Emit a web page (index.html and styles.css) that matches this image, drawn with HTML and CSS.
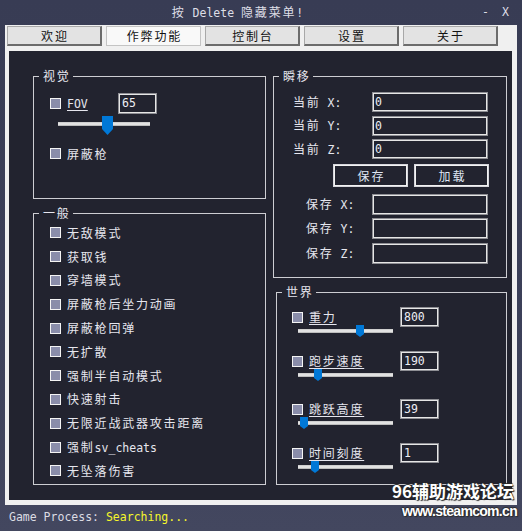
FILE: index.html
```html
<!DOCTYPE html>
<html lang="zh-CN">
<head>
<meta charset="utf-8">
<title>Menu</title>
<link rel="stylesheet" href="styles.css">
</head>
<body>
<div class="window">
  <header class="titlebar">
    <div class="title">按<span class="m"> Delete </span>隐藏菜单<span class="m">!</span></div>
    <span class="m ctl ctl-min">-</span>
    <span class="m ctl ctl-close">X</span>
  </header>

  <main class="panel">
    <nav class="tabs">
      <div class="tab">欢迎</div>
      <div class="tab active">作弊功能</div>
      <div class="tab">控制台</div>
      <div class="tab">设置</div>
      <div class="tab">关于</div>
    </nav>

    <div class="content">
      <div class="col">
        <section class="group g-visual">
          <span class="legend">视觉</span>
          <div class="row">
            <span class="cb"></span>
            <span class="lbl u fov-lbl"><span class="m">FOV</span></span>
            <div class="inp m fov-inp">65</div>
          </div>
          <div class="slider big">
            <div class="track"></div>
            <svg class="thumb" style="left:44px" width="11" height="19" viewBox="0 0 11 19"><polygon points="0,0 11,0 11,13 5.5,19 0,13" fill="#0078d7"/></svg>
          </div>
          <div class="row r-gun">
            <span class="cb"></span>
            <span class="lbl">屏蔽枪</span>
          </div>
        </section>

        <section class="group g-general">
          <span class="legend">一般</span>
          <div class="grow"><span class="cb"></span><span class="lbl">无敌模式</span></div>
          <div class="grow"><span class="cb"></span><span class="lbl">获取钱</span></div>
          <div class="grow"><span class="cb"></span><span class="lbl">穿墙模式</span></div>
          <div class="grow"><span class="cb"></span><span class="lbl">屏蔽枪后坐力动画</span></div>
          <div class="grow"><span class="cb"></span><span class="lbl">屏蔽枪回弹</span></div>
          <div class="grow"><span class="cb"></span><span class="lbl">无扩散</span></div>
          <div class="grow"><span class="cb"></span><span class="lbl">强制半自动模式</span></div>
          <div class="grow"><span class="cb"></span><span class="lbl">快速射击</span></div>
          <div class="grow"><span class="cb"></span><span class="lbl">无限近战武器攻击距离</span></div>
          <div class="grow"><span class="cb"></span><span class="lbl">强制<span class="m">sv_cheats</span></span></div>
          <div class="grow"><span class="cb"></span><span class="lbl">无坠落伤害</span></div>
        </section>
      </div>

      <div class="col">
        <section class="group g-tp">
          <span class="legend">瞬移</span>
          <div class="tp-row"><span class="lbl tp-lbl">当前<span class="m"> X:</span></span><div class="inp m tp-inp">0</div></div>
          <div class="tp-row"><span class="lbl tp-lbl">当前<span class="m"> Y:</span></span><div class="inp m tp-inp">0</div></div>
          <div class="tp-row"><span class="lbl tp-lbl">当前<span class="m"> Z:</span></span><div class="inp m tp-inp">0</div></div>
          <div class="tp-btns">
            <div class="btn">保存</div>
            <div class="btn">加载</div>
          </div>
          <div class="tp-saved">
            <div class="tp-row sv"><span class="lbl sv-lbl">保存<span class="m"> X:</span></span><div class="inp m tp-inp sv-inp"></div></div>
            <div class="tp-row sv"><span class="lbl sv-lbl">保存<span class="m"> Y:</span></span><div class="inp m tp-inp sv-inp"></div></div>
            <div class="tp-row sv"><span class="lbl sv-lbl">保存<span class="m"> Z:</span></span><div class="inp m tp-inp sv-inp"></div></div>
          </div>
        </section>

        <section class="group g-world">
          <span class="legend">世界</span>
          <div class="witem">
            <div class="wrow"><span class="cb"></span><span class="lbl u w-lbl">重力</span><div class="inp m w-inp">800</div></div>
            <div class="slider small">
              <div class="track"></div>
              <svg class="thumb" style="left:58px" width="8" height="12" viewBox="0 0 8 12"><polygon points="0,0 8,0 8,9 4,12 0,9" fill="#0078d7"/></svg>
            </div>
          </div>
          <div class="witem">
            <div class="wrow"><span class="cb"></span><span class="lbl u w-lbl">跑步速度</span><div class="inp m w-inp">190</div></div>
            <div class="slider small">
              <div class="track"></div>
              <svg class="thumb" style="left:16px" width="8" height="12" viewBox="0 0 8 12"><polygon points="0,0 8,0 8,9 4,12 0,9" fill="#0078d7"/></svg>
            </div>
          </div>
          <div class="witem w-wide">
            <div class="wrow"><span class="cb"></span><span class="lbl u w-lbl">跳跃高度</span><div class="inp m w-inp">39</div></div>
            <div class="slider small">
              <div class="track"></div>
              <svg class="thumb" style="left:2px" width="8" height="12" viewBox="0 0 8 12"><polygon points="0,0 8,0 8,9 4,12 0,9" fill="#0078d7"/></svg>
            </div>
          </div>
          <div class="witem">
            <div class="wrow"><span class="cb"></span><span class="lbl u w-lbl">时间刻度</span><div class="inp m w-inp">1</div></div>
            <div class="slider small">
              <div class="track"></div>
              <svg class="thumb" style="left:13px" width="8" height="12" viewBox="0 0 8 12"><polygon points="0,0 8,0 8,9 4,12 0,9" fill="#0078d7"/></svg>
            </div>
          </div>
        </section>
      </div>
    </div>
  </main>

  <footer class="status m">Game Process: <span class="searching">Searching...</span></footer>

  <div class="wm">
    <div class="wm1">96辅助游戏论坛</div>
    <div class="wm2">www.steamcom.cn</div>
  </div>
</div>
</body>
</html>
```

FILE: styles.css
```css
html, body {
  margin: 0;
  padding: 0;
}

body {
  width: 522px;
  height: 531px;
  overflow: hidden;
  background: #3a3e56;
  font-family: "Noto Sans CJK SC", sans-serif;
  font-size: 12px;
  letter-spacing: 1.8px;
  color: #e6e6ee;
}

.m {
  font-family: "DejaVu Sans Mono", monospace;
  font-size: 11.5px;
  letter-spacing: 0;
}

.window {
  position: relative;
  width: 522px;
  height: 531px;
  background: linear-gradient(#383c54, #3c4059 60%, #43475f);
}

/* title bar */
.titlebar {
  height: 25px;
  display: flex;
  align-items: center;
  color: #dedee6;
  line-height: 25px;
}

.title {
  width: 475px;
  text-align: center;
  white-space: nowrap;
}

.ctl-min {
  margin-left: 7px;
}

.ctl-close {
  margin-left: 13px;
}

/* light panel */
.panel {
  display: block;
  margin: 0 5px;
  height: 480px;
  background: #f0f0f0;
  box-sizing: border-box;
}

.tabs {
  display: flex;
  gap: 4px;
  height: 26px;
  padding: 1px 0 0 2px;
  box-sizing: border-box;
}

.tab {
  width: 95px;
  height: 20px;
  box-sizing: border-box;
  background: #e3e3e3;
  border: 1px solid #a8a8a8;
  border-right: 2px solid #6c6c6c;
  border-bottom: 2px solid #6c6c6c;
  color: #111;
  font-size: 12px;
  line-height: 17px;
  text-align: center;
  text-indent: 1.8px;
}

.tab.active {
  background: #f9f9f9;
  border: 1px solid #c4c4c4;
  line-height: 18px;
}

.content {
  display: flex;
  gap: 7px;
  margin: 0 5px 5px 4px;
  height: 449px;
  box-sizing: border-box;
  padding: 25px 5px 15px 24px;
  background: #22232f;
}

.col {
  display: flex;
  flex-direction: column;
  gap: 14px;
}

.col:first-child {
  width: 233px;
}

.col:last-child {
  width: 234px;
}

/* group boxes */
.group {
  position: relative;
  box-sizing: border-box;
  border: 1px solid #cdcdd2;
}

.legend {
  position: absolute;
  top: -9px;
  left: 5px;
  padding: 0 2px 0 4px;
  background: #22232f;
  line-height: 16px;
  white-space: nowrap;
}

.cb {
  flex: none;
  width: 11px;
  height: 11px;
  box-sizing: border-box;
  border: 1px solid #f4f4f4;
  background: #8a8daa;
  margin-right: 6px;
}

.lbl {
  white-space: nowrap;
  line-height: 16px;
}

.u {
  text-decoration: underline;
  text-underline-offset: 2px;
}

.inp {
  box-sizing: border-box;
  border: 1px solid #8e8e94;
  box-shadow: inset 0 0 0 1px #e6e6e6;
  background: #22232f;
  color: #eeeef4;
  padding-left: 3px;
  white-space: nowrap;
}

/* visual */
.g-visual {
  height: 123px;
  padding: 16px 0 0 16px;
}

.row {
  display: flex;
  align-items: center;
  height: 21px;
}

.fov-lbl {
  width: 51px;
}

.fov-inp {
  width: 39px;
  height: 21px;
  line-height: 19px;
}

.r-gun {
  margin-top: 8px;
}

.slider {
  position: relative;
  box-sizing: border-box;
}

.slider .track {
  height: 4px;
  background: #e2e2e2;
  box-shadow: inset 0 -1px 0 #bdbdbd, inset 0 1px 0 #cfcfcf;
}

.slider .thumb {
  position: absolute;
  top: 0;
  display: block;
}

.slider.big {
  width: 92px;
  height: 19px;
  margin: 2px 0 0 8px;
  padding-top: 6px;
}

.slider.small {
  width: 95px;
  height: 12px;
  margin: -2px 0 0 6px;
  padding-top: 4px;
}

/* general */
.g-general {
  height: 272px;
  padding: 7px 0 0 16px;
}

.grow {
  display: flex;
  align-items: center;
  height: 23.8px;
}

/* teleport */
.g-tp {
  height: 202px;
  padding: 15px 0 0 19px;
}

.tp-row {
  display: flex;
  align-items: center;
  height: 20px;
  margin-bottom: 3.5px;
}

.tp-lbl {
  width: 79px;
}

.tp-inp {
  width: 116px;
  height: 20px;
  line-height: 18px;
  padding-left: 2px;
}

.tp-btns {
  display: flex;
  gap: 6px;
  margin: 4.5px 0 0 40px;
}

.btn {
  width: 75px;
  height: 23px;
  box-sizing: border-box;
  border: 1px solid #d6d6dc;
  box-shadow: inset 0 0 0 1px #f2f2f2;
  text-align: center;
  line-height: 21px;
  text-indent: 1.8px;
  color: #dfe6f4;
}

.tp-saved {
  margin-top: 7px;
  padding-left: 13px;
}

.tp-row.sv {
  height: 21px;
}

.sv-lbl {
  width: 66px;
}

.sv-inp {
  height: 21px;
}

/* world */
.g-world {
  height: 193px;
  margin-left: 3px;
  padding: 14px 0 0 15px;
}

.witem + .witem {
  margin-top: 14px;
}

.witem.w-wide {
  margin-top: 18px;
}

.wrow {
  display: flex;
  align-items: center;
  height: 20px;
}

.w-lbl {
  width: 91px;
}

.w-inp {
  width: 39px;
  height: 20px;
  line-height: 18px;
}

/* status bar */
.status {
  height: 26px;
  line-height: 25px;
  padding-left: 9px;
  color: #dcdce4;
}

.searching {
  color: #f6f62a;
}

/* watermark */
.wm {
  position: absolute;
  right: 8px;
  top: 482px;
  text-align: right;
  color: #ffffff;
  font-weight: bold;
  letter-spacing: 0;
  text-shadow: 1px 1px 1px #2a2a2a, -1px 0 1px #2a2a2a, 0 -1px 1px #2a2a2a;
}

.wm1 {
  font-family: "Noto Sans CJK SC", sans-serif;
  font-size: 17px;
  line-height: 18px;
}

.wm2 {
  font-family: "Liberation Sans", sans-serif;
  font-size: 14px;
  line-height: 14px;
  margin-top: 4px;
  letter-spacing: -0.7px;
  margin-right: -3px;
}
```
